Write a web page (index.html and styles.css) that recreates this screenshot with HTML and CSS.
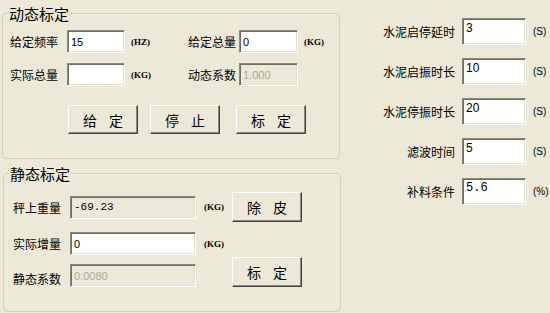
FILE: index.html
```html
<!DOCTYPE html>
<html lang="zh-CN">
<head>
  <meta charset="UTF-8" />
  <title>标定</title>
  <link rel="stylesheet" href="styles.css">
</head>
<body>
  <div class="window">
    <div class="left">
      <fieldset class="group dynamic">
        <legend>动态标定</legend>
        <div class="row">
          <span class="label">给定频率</span>
          <input class="field" type="text" value="15">
          <span class="unit wide">(HZ)</span>
          <span class="label short">给定总量</span>
          <input class="field" type="text" value="0">
          <span class="unit">(KG)</span>
        </div>
        <div class="row second">
          <span class="label">实际总量</span>
          <input class="field" type="text" value="">
          <span class="unit wide">(KG)</span>
          <span class="label short">动态系数</span>
          <input class="field" type="text" value="1.000" disabled>
        </div>
        <div class="buttons">
          <button class="btn">给 定</button>
          <button class="btn">停 止</button>
          <button class="btn">标 定</button>
        </div>
      </fieldset>

      <fieldset class="group static">
        <legend>静态标定</legend>
        <div class="srow">
          <span class="label">秤上重量</span>
          <input class="field long readonly mono" type="text" value="-69.23" readonly>
          <span class="unit kg">(KG)</span>
          <button class="btn tall">除 皮</button>
        </div>
        <div class="srow">
          <span class="label">实际增量</span>
          <input class="field long" type="text" value="0">
          <span class="unit kg">(KG)</span>
        </div>
        <div class="srow last">
          <span class="label">静态系数</span>
          <input class="field long" type="text" value="0.0080" disabled>
          <span class="unit kg"></span>
          <button class="btn tall">标 定</button>
        </div>
      </fieldset>
    </div>

    <div class="right">
      <span class="rlabel">水泥启停延时</span>
      <input class="field box" type="text" value="3">
      <span class="sunit">(S)</span>

      <span class="rlabel">水泥启振时长</span>
      <input class="field box" type="text" value="10">
      <span class="sunit">(S)</span>

      <span class="rlabel">水泥停振时长</span>
      <input class="field box" type="text" value="20">
      <span class="sunit">(S)</span>

      <span class="rlabel">滤波时间</span>
      <input class="field box" type="text" value="5">
      <span class="sunit">(S)</span>

      <span class="rlabel">补料条件</span>
      <input class="field box mono" type="text" value="5.6">
      <span class="sunit">(%)</span>
    </div>
  </div>
</body>
</html>
```

FILE: styles.css
```css
body {
  margin: 0;
  background-color: #ece9d8;
  font-family: "Noto Sans CJK SC", sans-serif;
  font-size: 12px;
  color: #000;
}

.window {
  display: flex;
  width: 550px;
  height: 313px;
}

.left {
  width: 338px;
  margin-left: 2px;
  padding-top: 5px;
}

.group {
  margin: 0;
  padding: 0;
  border: 1px solid #d0d0bf;
  border-radius: 4px;
}

.group legend {
  margin-left: 5px;
  padding: 0 1px;
  font-size: 15px;
  line-height: 17px;
}

.dynamic {
  padding: 8px 0 24px 0;
}

.static {
  margin-top: 6px;
  margin-left: 1px;
  width: 336px;
  padding: 10px 0 24px 0;
}

.row {
  display: flex;
  align-items: center;
  height: 23px;
  padding-left: 7px;
}

.row.second {
  margin-top: 10px;
}

.label {
  width: 57px;
  flex: none;
}

.label.short {
  width: 51px;
}

.field {
  box-sizing: border-box;
  width: 58px;
  height: 23px;
  margin: 0;
  padding: 0 3px;
  border: 1px solid;
  border-color: #8c8a80 #fff #fff #8c8a80;
  box-shadow: inset 1px 1px #6f6d64, inset -1px -1px #e6e3d4;
  background: #fff;
  font-family: "Liberation Sans", sans-serif;
  font-size: 11px;
  color: #000;
  outline: none;
}

.row .label.short + .field {
  width: 59px;
}

.field:disabled,
.field.readonly {
  background: #ece9d8;
}

.field:disabled {
  color: #aca899;
}

.mono {
  font-family: "Liberation Mono", monospace;
}

.unit {
  margin-left: 6px;
  font-family: "Liberation Serif", serif;
  font-size: 9px;
  font-weight: bold;
}

.unit.wide {
  width: 57px;
}

.buttons {
  display: flex;
  gap: 12px;
  margin: 19px 0 0 65px;
}

.buttons .btn:last-child {
  margin-left: 4px;
}

.btn {
  width: 70px;
  height: 29px;
  margin: 0;
  padding: 0;
  border: 1px solid;
  border-color: #fff #404040 #404040 #fff;
  box-shadow: inset -1px -1px #8c8a80;
  background: #ece9d8;
  font-family: "Noto Sans CJK SC", sans-serif;
  font-size: 14px;
  word-spacing: 9px;
  color: #000;
}

.btn.tall {
  height: 30px;
}

.srow {
  display: flex;
  align-items: center;
  margin-top: 10px;
  padding-left: 8px;
}

.static legend + .srow {
  margin-top: 0;
}

.srow.last {
  align-items: flex-end;
  margin-top: 2px;
}

.srow .label {
  margin-left: 1px;
}

.field.long {
  width: 126px;
}

.unit.kg {
  width: 28px;
  margin-left: 8px;
}

.right {
  display: grid;
  grid-template-columns: 115px 64px auto;
  grid-auto-rows: 27px;
  column-gap: 7px;
  row-gap: 13px;
  align-items: center;
  align-content: start;
  padding-top: 18px;
}

.rlabel {
  text-align: right;
}

.field.box {
  width: 64px;
  height: 27px;
  padding: 2px 3px 9px;
  font-size: 12px;
}

.sunit {
  font-family: "Liberation Sans", sans-serif;
  font-size: 10px;
}
```
